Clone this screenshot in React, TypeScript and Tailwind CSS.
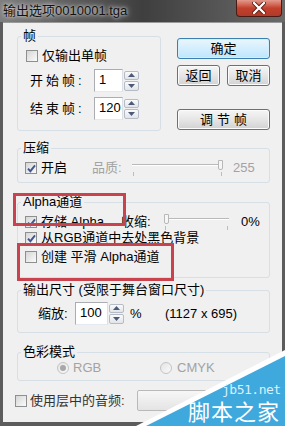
import type { ReactNode } from 'react';

function Check({ checked }: { checked?: boolean }) {
  return (
    <span className="w-[12px] h-[12px] shrink-0 border border-[#8e8f8f] bg-gradient-to-br from-[#d6d6d6] to-[#fbfbfb] flex items-center justify-center">
      {checked && (
        <svg width="9" height="9" viewBox="0 0 9 9">
          <path d="M1 4.6 L3.4 7.2 L8 1.4" stroke="#42568e" strokeWidth="1.9" fill="none" />
        </svg>
      )}
    </span>
  );
}

function Radio({ checked }: { checked?: boolean }) {
  return (
    <span className="w-[12px] h-[12px] shrink-0 rounded-full border border-[#c4c4c4] bg-gradient-to-br from-[#e4e4e4] to-[#fafafa] flex items-center justify-center">
      {checked && <span className="w-[6px] h-[6px] rounded-full bg-[#a8a8a8]" />}
    </span>
  );
}

function Btn({ children, className = '', primary }: { children: ReactNode; className?: string; primary?: boolean }) {
  return (
    <div
      className={`h-[21px] rounded-[3px] border flex items-center justify-center text-[13px] text-black ${
        primary
          ? 'border-[#3c7fb1] bg-gradient-to-b from-[#eaf6fd] to-[#bee6fd] shadow-[inset_0_0_0_1px_#d3eefc]'
          : 'border-[#707070] bg-gradient-to-b from-[#f6f6f6] via-[#e6e6e6] to-[#d2d2d2] shadow-[inset_0_0_0_1px_#fbfbfb]'
      } ${className}`}
    >
      {children}
    </div>
  );
}

function Spin({ h }: { h: string }) {
  return (
    <div className={`w-[15px] ${h} flex flex-col gap-[1px] ml-[1px]`}>
      <div className="flex-1 border border-[#b5bcc7] rounded-[2px] bg-gradient-to-b from-[#fbfbfb] to-[#e2e4e8] flex items-center justify-center">
        <svg width="7" height="4" viewBox="0 0 7 4"><path d="M0 4 L3.5 0 L7 4 Z" fill="#4b5a78" /></svg>
      </div>
      <div className="flex-1 border border-[#b5bcc7] rounded-[2px] bg-gradient-to-b from-[#fbfbfb] to-[#e2e4e8] flex items-center justify-center">
        <svg width="7" height="4" viewBox="0 0 7 4"><path d="M0 0 L7 0 L3.5 4 Z" fill="#4b5a78" /></svg>
      </div>
    </div>
  );
}

function Field({ value, w }: { value: string; w: string }) {
  return (
    <div className={`${w} h-[23px] bg-white border border-[#abadb3] border-b-[#e3e9ef] border-r-[#dbdfe6] pl-[4px] pt-[1px] text-[13px] leading-[17px] text-black`}>
      {value}
    </div>
  );
}

function Slider({ w, thumb }: { w: string; thumb: 'start' | 'end' }) {
  return (
    <div className={`${w} h-[16px] flex flex-col`}>
      <div className="h-[10px]" />
      <div className="relative h-[6px]">
        <div className="absolute left-0 right-0 -top-[6px] h-[2px] border-t border-[#b9b9b9] border-b border-b-white" />
        <div className={`absolute -top-[10px] w-[5px] h-[10px] border border-[#b8b8b8] bg-[#f6f6f6] rounded-b-[2px] ${thumb === 'end' ? 'right-0' : 'left-0'}`} />
        <div className="absolute left-[1px] top-[2px] w-[1px] h-[4px] bg-[#bdbdbd]" />
        <div className="absolute right-[1px] top-[2px] w-[1px] h-[4px] bg-[#bdbdbd]" />
      </div>
    </div>
  );
}

function Group({ title, h, className = '', children }: { title: string; h: string; className?: string; children: ReactNode }) {
  return (
    <fieldset className={`${h} border border-[#d5dfe5] rounded-[3px] p-0 m-0 min-w-0 ${className}`}>
      <legend className="ml-[3px] px-[2px] text-[13px] leading-[14px] text-black">{title}</legend>
      {children}
    </fieldset>
  );
}

export default function App() {
  return (
    <div className="relative w-[285px] h-[426px] overflow-hidden bg-[#5c5c5c] font-['Liberation_Sans','Noto_Sans_CJK_SC',sans-serif] select-none">
      {/* title bar */}
      <div className="relative h-[22px] flex items-start bg-gradient-to-r from-[#7d7d7d] via-[#3f3f3f] to-[#6a6a6a]">
        <span className="ml-[3px] mt-[3px] text-[13px] leading-[15px] text-[#111] [text-shadow:0_0_6px_#e8e8e8,0_0_3px_#d0d0d0]">
          输出选项0010001.tga
        </span>
        <div className="absolute left-[236px] top-0 w-[46px] h-[17px] rounded-b-[4px] border border-t-0 border-[#4a1a14] bg-gradient-to-b from-[#e39a8d] via-[#c4402c] to-[#b03a2a] flex items-center justify-center">
          <svg width="14" height="12" viewBox="0 0 14 12">
            <path d="M2 1 L12 11 M12 1 L2 11" stroke="#5a1a12" strokeWidth="4" strokeLinecap="round" />
            <path d="M2 1 L12 11 M12 1 L2 11" stroke="#ffffff" strokeWidth="2.4" strokeLinecap="round" />
          </svg>
        </div>
      </div>

      {/* client area */}
      <div className="mx-[3px] h-[400px] bg-[#f0f0f0] border-t border-[#9a9a9a] pl-[14px] pr-[12px] pt-[6px] text-[13px] text-black">
        <div className="flex items-start">
          <Group title="帧" h="h-[102px]" className="w-[144px]">
            <div className="mt-[6px] h-[14px] pl-[8px] flex items-center gap-[4px]">
              <Check />
              <span className="leading-[14px]">仅输出单帧</span>
            </div>
            <div className="mt-[6px] flex items-center">
              <span className="pl-[12px] w-[76px] tracking-[3px]">开始帧:</span>
              <Field value="1" w="w-[29px]" />
              <Spin h="h-[20px]" />
            </div>
            <div className="mt-[5px] flex items-center">
              <span className="pl-[12px] w-[76px] tracking-[3px]">结束帧:</span>
              <Field value="120" w="w-[29px]" />
              <Spin h="h-[20px]" />
            </div>
          </Group>
          <div className="ml-[16px] w-[93px] pt-[9px] flex flex-col">
            <Btn primary>确定</Btn>
            <div className="mt-[6px] flex justify-between">
              <Btn className="w-[43px]">返回</Btn>
              <Btn className="w-[43px]">取消</Btn>
            </div>
            <Btn className="mt-[23px] tracking-[4px] pl-[4px]">调节帧</Btn>
          </div>
        </div>

        <Group title="压缩" h="h-[42px]" className="mt-[10px]">
          <div className="mt-[6px] h-[14px] pl-[7px] flex items-center">
            <Check checked />
            <span className="ml-[4px] w-[51px]">开启</span>
            <span className="text-[#a3a3a3] w-[40px]">品质:</span>
            <Slider w="w-[91px]" thumb="end" />
            <span className="ml-[10px] text-[#a3a3a3]">255</span>
          </div>
        </Group>

        <Group title="Alpha通道" h="h-[83px]" className="mt-[12px]">
          <div className="mt-[6px] h-[14px] pl-[7px] flex items-center">
            <Check checked />
            <span className="ml-[4px] w-[80px]">存储 Alpha</span>
            <span className="w-[43px]">收缩:</span>
            <Slider w="w-[65px]" thumb="start" />
            <span className="ml-[12px]">0%</span>
          </div>
          <div className="mt-[2px] h-[14px] pl-[7px] flex items-center">
            <Check checked />
            <span className="ml-[4px]">从RGB通道中去处黑色背景</span>
          </div>
          <div className="mt-[5px] h-[14px] pl-[7px] flex items-center">
            <Check />
            <span className="ml-[4px]">创建 平滑 Alpha通道</span>
          </div>
        </Group>

        <Group title="输出尺寸 (受限于舞台窗口尺寸)" h="h-[50px]" className="mt-[5px]">
          <div className="mt-[5px] flex items-center">
            <span className="pl-[20px] w-[57px]">缩放:</span>
            <Field value="100" w="w-[33px]" />
            <Spin h="h-[20px]" />
            <span className="ml-[6px] w-[35px]">%</span>
            <span>(1127 x 695)</span>
          </div>
        </Group>

        <Group title="色彩模式" h="h-[36px]" className="mt-[12px]">
          <div className="mt-[2px] h-[14px] pl-[39px] flex items-center text-[#a3a3a3]">
            <Radio checked />
            <span className="ml-[4px] w-[87px]">RGB</span>
            <Radio />
            <span className="ml-[5px]">CMYK</span>
          </div>
        </Group>

        <div className="mt-[9px] flex items-center -ml-[2px]">
          <Check />
          <span className="ml-[3px] w-[107px] text-[#333]">使用层中的音频:</span>
          <div className="w-[70px] h-[21px] border border-[#b9b9b9] rounded-[2px] bg-gradient-to-b from-[#f7f7f7] to-[#e4e4e4]" />
        </div>
      </div>

      {/* highlight boxes */}
      <div className="absolute left-[13px] top-[193px] w-[113px] h-[33px] border-[3px] border-[#c8434d]" />
      <div className="absolute left-[17px] top-[243px] w-[157px] h-[38px] border-[3px] border-[#c8434d]" />

      {/* watermark */}
      <svg className="absolute left-0 top-0" width="285" height="426" viewBox="0 0 285 426">
        <polygon points="136,426 285,350 285,426" fill="#ffffff" />
        <polygon points="146,426 285,356 285,426" fill="#3fa9de" />
      </svg>
      <span className="absolute left-[222px] top-[383px] text-[13px] leading-[13px] text-[#d9f0fb] font-['DejaVu_Sans_Mono',monospace] tracking-[-0.5px]">
        jb51.net
      </span>
      <span className="absolute left-[188px] top-[400px] text-[22px] leading-[20px] text-white font-['Noto_Sans_CJK_SC',sans-serif] tracking-[1px]">
        脚本之家
      </span>
    </div>
  );
}
